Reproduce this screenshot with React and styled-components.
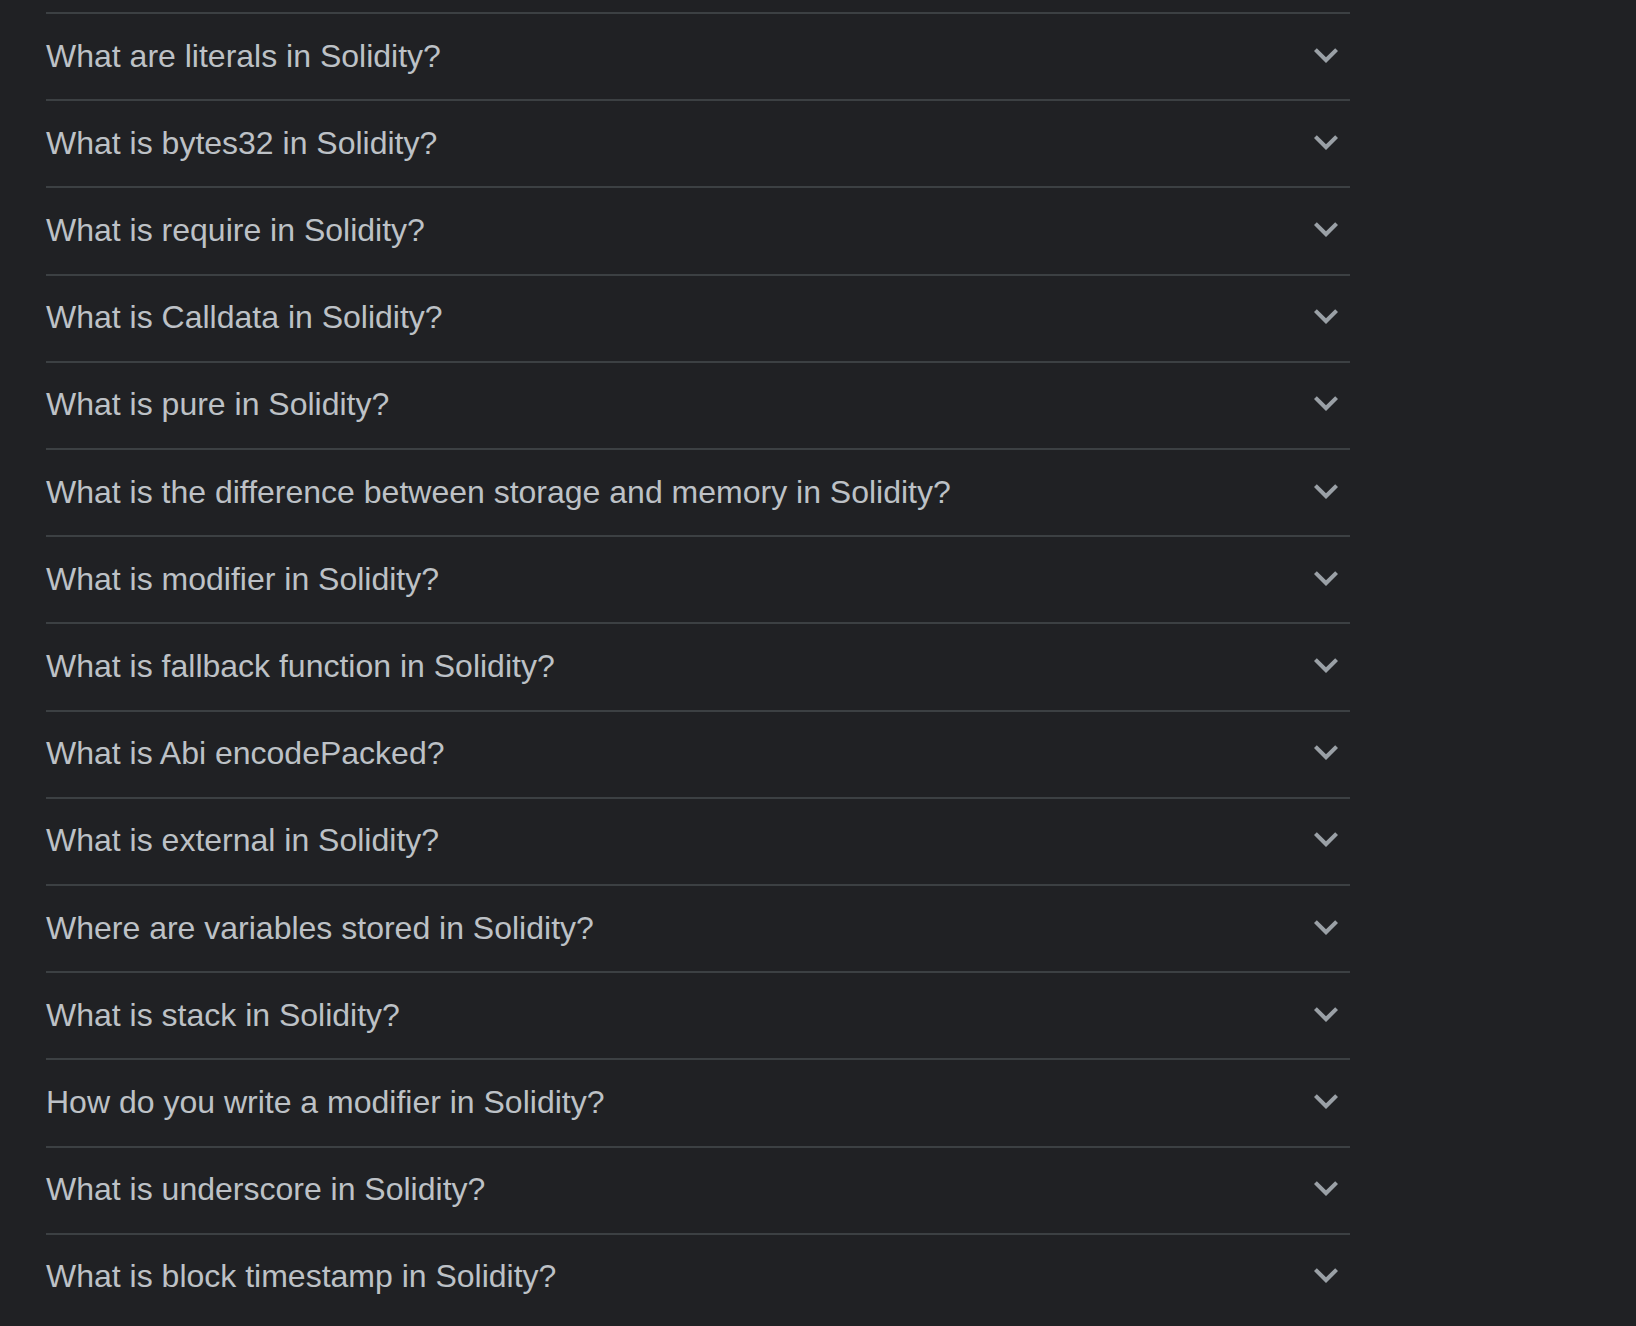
import React from "react";
import styled, { createGlobalStyle } from "styled-components";

const questions = [
  "What are literals in Solidity?",
  "What is bytes32 in Solidity?",
  "What is require in Solidity?",
  "What is Calldata in Solidity?",
  "What is pure in Solidity?",
  "What is the difference between storage and memory in Solidity?",
  "What is modifier in Solidity?",
  "What is fallback function in Solidity?",
  "What is Abi encodePacked?",
  "What is external in Solidity?",
  "Where are variables stored in Solidity?",
  "What is stack in Solidity?",
  "How do you write a modifier in Solidity?",
  "What is underscore in Solidity?",
  "What is block timestamp in Solidity?",
];

function Chevron() {
  return (
    <ChevronIcon viewBox="0 0 24 24" aria-hidden="true">
      <path d="M16.59 8.59L12 13.17 7.41 8.59 6 10l6 6 6-6z" />
    </ChevronIcon>
  );
}

function App() {
  return (
    <>
      <GlobalStyle />
      <Page>
        <List>
          {questions.map((q) => (
            <Row key={q}>
              <Question>{q}</Question>
              <Chevron />
            </Row>
          ))}
        </List>
      </Page>
    </>
  );
}

export default App;

const GlobalStyle = createGlobalStyle`
  html, body {
    margin: 0;
    padding: 0;
    background: #202124;
  }
  body {
    font-family: "Liberation Sans", Arial, sans-serif;
  }
`;

const Page = styled.div`
  height: 1326px;
  padding: 12px 0 0 46px;
  box-sizing: border-box;
  background: #202124;
  overflow: hidden;
`;

const List = styled.div`
  width: 1304px;
  display: flex;
  flex-direction: column;
`;

const Row = styled.div`
  display: flex;
  align-items: center;
  justify-content: space-between;
  box-sizing: border-box;
  height: 87.21px;
  flex-shrink: 0;
  border-top: 2px solid #3c4043;
  padding-bottom: 1px;
  cursor: pointer;
`;

const Question = styled.div`
  color: #bdc1c6;
  font-size: 32px;
  line-height: 37px;
  white-space: nowrap;
`;

const ChevronIcon = styled.svg`
  width: 48px;
  height: 48px;
  margin-bottom: 3px;
  fill: #9aa0a6;
  flex-shrink: 0;
`;
